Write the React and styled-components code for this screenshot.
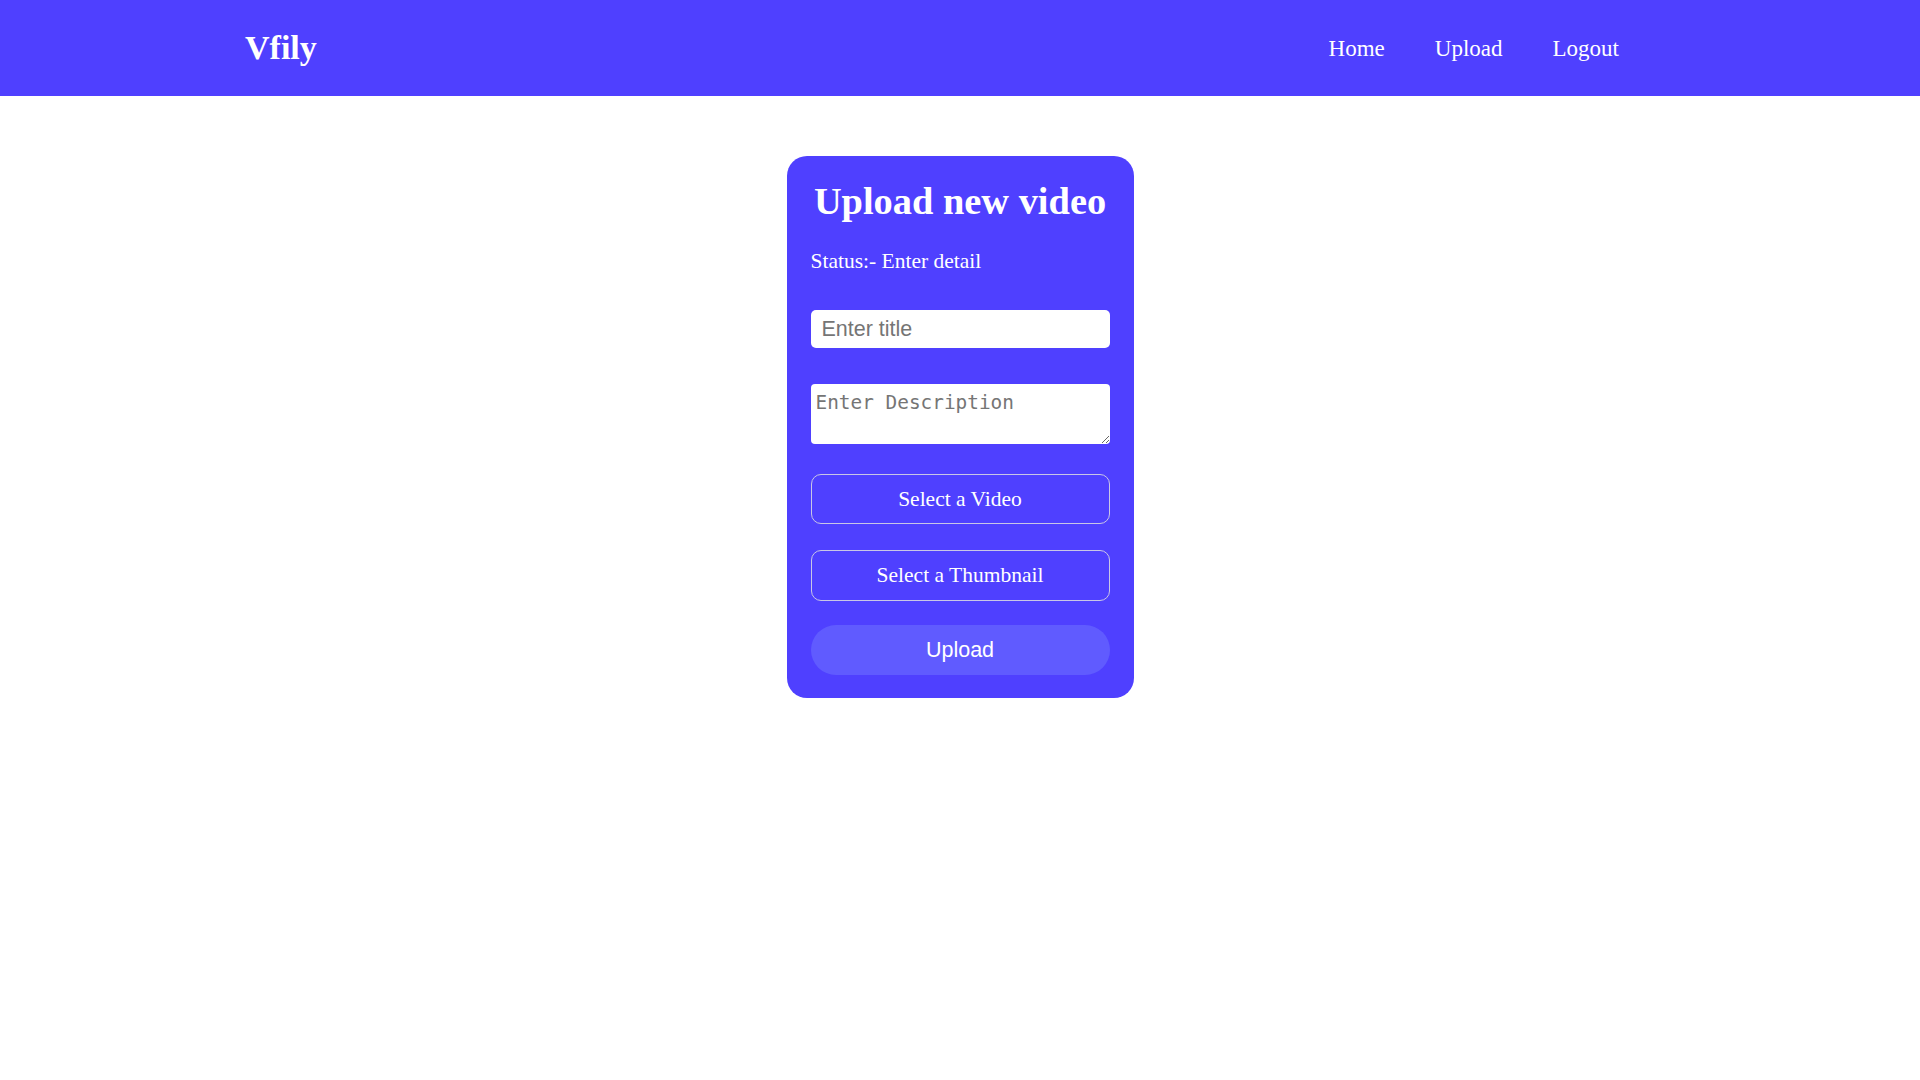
import styled, { createGlobalStyle } from "styled-components";

const GlobalStyle = createGlobalStyle`
  body {
    margin: 0;
    background: #ffffff;
    font-family: "Liberation Serif", "Times New Roman", serif;
  }
`;

const NavBar = styled.nav`
  height: 96px;
  background-color: #4f40ff;
  display: flex;
  align-items: center;
  justify-content: space-between;
  padding: 0 301px 0 245px;
  color: #ffffff;
`;

const Logo = styled.div`
  font-size: 34px;
  font-weight: bold;
`;

const NavLinks = styled.div`
  display: flex;
  gap: 50px;
  padding-top: 2px;
`;

const NavLink = styled.a`
  font-size: 23px;
  color: #ffffff;
  text-decoration: none;
  cursor: pointer;
`;

const Card = styled.div`
  width: 299px;
  margin: 60px auto 0 auto;
  padding: 23px 24px 23px 24px;
  background-color: #4f40ff;
  border-radius: 20px;
  display: flex;
  flex-direction: column;
  color: #ffffff;
`;

const Title = styled.h1`
  margin: 0;
  font-size: 38.4px;
  font-weight: bold;
  text-align: center;
  white-space: nowrap;
`;

const Status = styled.p`
  margin: 26px 0 0 0;
  font-size: 21.5px;
`;

const TitleInput = styled.input`
  box-sizing: border-box;
  margin-top: 36px;
  width: 100%;
  height: 38px;
  border: none;
  border-radius: 5px;
  padding: 0 11px;
  font-family: "Liberation Sans", Arial, sans-serif;
  font-size: 21.5px;
  outline: none;
  &::placeholder {
    color: #757575;
  }
`;

const DescInput = styled.textarea`
  box-sizing: border-box;
  display: block;
  margin-top: 36px;
  width: 100%;
  height: 60px;
  border: none;
  border-radius: 4px;
  padding: 7px 5px;
  font-family: "DejaVu Sans Mono", monospace;
  font-size: 19.4px;
  outline: none;
  &::placeholder {
    color: #757575;
  }
`;

const PickButton = styled.button`
  box-sizing: border-box;
  margin-top: ${(p) => p.$gap}px;
  width: 100%;
  height: ${(p) => p.$height || 50}px;
  background: transparent;
  border: 1px solid #c9c6e6;
  border-radius: 10px;
  color: #ffffff;
  font-family: "Liberation Serif", "Times New Roman", serif;
  font-size: 21.5px;
  cursor: pointer;
`;

const UploadButton = styled.button`
  margin-top: 24px;
  width: 100%;
  height: 50px;
  border: none;
  border-radius: 25px;
  background-color: #605bff;
  color: #ffffff;
  font-family: "Liberation Sans", Arial, sans-serif;
  font-size: 21.5px;
  cursor: pointer;
`;

export default function App() {
  return (
    <>
      <GlobalStyle />
      <NavBar>
        <Logo>Vfily</Logo>
        <NavLinks>
          <NavLink>Home</NavLink>
          <NavLink>Upload</NavLink>
          <NavLink>Logout</NavLink>
        </NavLinks>
      </NavBar>
      <Card>
        <Title>Upload new video</Title>
        <Status>Status:- Enter detail</Status>
        <TitleInput type="text" placeholder="Enter title" />
        <DescInput placeholder="Enter Description" />
        <PickButton $gap={30}>Select a Video</PickButton>
        <PickButton $gap={26} $height={51}>
          Select a Thumbnail
        </PickButton>
        <UploadButton>Upload</UploadButton>
      </Card>
    </>
  );
}
